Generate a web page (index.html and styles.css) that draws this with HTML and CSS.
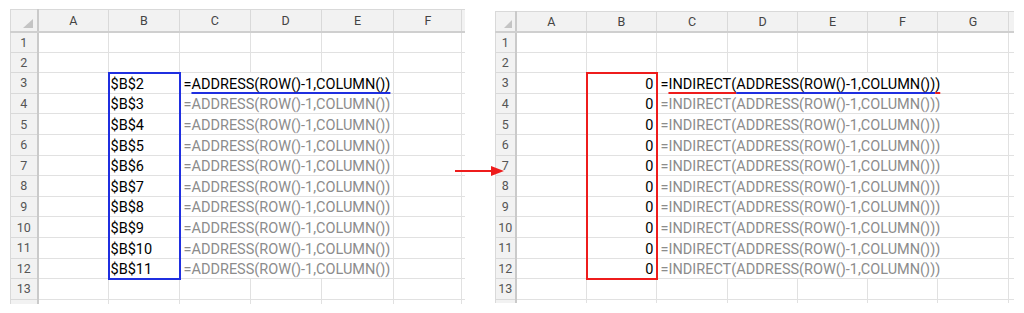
FILE: index.html
```html
<!DOCTYPE html>
<html lang="ja">
<head>
<meta charset="utf-8">
<title>ADDRESS / INDIRECT</title>
<link rel="stylesheet" href="styles.css">
</head>
<body>
<div class="page">
  <div class="sheet sheet-left">
    <table class="grid">
      <colgroup>
        <col style="width:27px"><col style="width:71px"><col style="width:71px"><col style="width:70px"><col style="width:70px"><col style="width:72px"><col style="width:68px"><col style="width:20px">
      </colgroup>
      <tr class="hdr"><th class="corner"><span class="tri"></span></th><th>A</th><th>B</th><th>C</th><th>D</th><th>E</th><th>F</th><th></th></tr>
      <tr><th>1</th><td></td><td></td><td></td><td></td><td></td><td></td><td></td></tr>
      <tr><th>2</th><td></td><td></td><td></td><td></td><td></td><td></td><td></td></tr>
      <tr><th>3</th><td></td><td class="sel-b top">$B$2</td><td colspan="3" class="f act">=<span class="ul-blue">ADDRESS(ROW()-1,COLUMN())</span></td><td></td><td></td></tr>
      <tr><th>4</th><td></td><td class="sel-b">$B$3</td><td colspan="3" class="f">=ADDRESS(ROW()-1,COLUMN())</td><td></td><td></td></tr>
      <tr><th>5</th><td></td><td class="sel-b">$B$4</td><td colspan="3" class="f">=ADDRESS(ROW()-1,COLUMN())</td><td></td><td></td></tr>
      <tr><th>6</th><td></td><td class="sel-b">$B$5</td><td colspan="3" class="f">=ADDRESS(ROW()-1,COLUMN())</td><td></td><td></td></tr>
      <tr><th>7</th><td></td><td class="sel-b">$B$6</td><td colspan="3" class="f">=ADDRESS(ROW()-1,COLUMN())</td><td></td><td></td></tr>
      <tr><th>8</th><td></td><td class="sel-b">$B$7</td><td colspan="3" class="f">=ADDRESS(ROW()-1,COLUMN())</td><td></td><td></td></tr>
      <tr><th>9</th><td></td><td class="sel-b">$B$8</td><td colspan="3" class="f">=ADDRESS(ROW()-1,COLUMN())</td><td></td><td></td></tr>
      <tr><th>10</th><td></td><td class="sel-b">$B$9</td><td colspan="3" class="f">=ADDRESS(ROW()-1,COLUMN())</td><td></td><td></td></tr>
      <tr><th>11</th><td></td><td class="sel-b">$B$10</td><td colspan="3" class="f">=ADDRESS(ROW()-1,COLUMN())</td><td></td><td></td></tr>
      <tr><th>12</th><td></td><td class="sel-b bottom">$B$11</td><td colspan="3" class="f">=ADDRESS(ROW()-1,COLUMN())</td><td></td><td></td></tr>
      <tr><th>13</th><td></td><td></td><td></td><td></td><td></td><td></td><td></td></tr>
      <tr><th></th><td></td><td></td><td></td><td></td><td></td><td></td><td></td></tr>
    </table>
  </div>

  <div class="sheet sheet-right">
    <table class="grid narrow">
      <colgroup>
        <col style="width:20px"><col style="width:71px"><col style="width:70px"><col style="width:71px"><col style="width:70px"><col style="width:70px"><col style="width:70px"><col style="width:71px"><col style="width:20px">
      </colgroup>
      <tr class="hdr hdr-r"><th class="corner"><span class="tri small"></span></th><th>A</th><th>B</th><th>C</th><th>D</th><th>E</th><th>F</th><th>G</th><th></th></tr>
      <tr><th>1</th><td></td><td></td><td></td><td></td><td></td><td></td><td></td><td></td></tr>
      <tr><th>2</th><td></td><td></td><td></td><td></td><td></td><td></td><td></td><td></td></tr>
      <tr><th>3</th><td></td><td class="sel-r num top">0</td><td colspan="5" class="f act">=<span class="ul-red">INDIRECT(</span><span class="ul-blue">ADDRESS(ROW()-1,COLUMN())</span><span class="ul-red">)</span></td><td></td></tr>
      <tr><th>4</th><td></td><td class="sel-r num">0</td><td colspan="5" class="f">=INDIRECT(ADDRESS(ROW()-1,COLUMN()))</td><td></td></tr>
      <tr><th>5</th><td></td><td class="sel-r num">0</td><td colspan="5" class="f">=INDIRECT(ADDRESS(ROW()-1,COLUMN()))</td><td></td></tr>
      <tr><th>6</th><td></td><td class="sel-r num">0</td><td colspan="5" class="f">=INDIRECT(ADDRESS(ROW()-1,COLUMN()))</td><td></td></tr>
      <tr><th>7</th><td></td><td class="sel-r num">0</td><td colspan="5" class="f">=INDIRECT(ADDRESS(ROW()-1,COLUMN()))</td><td></td></tr>
      <tr><th>8</th><td></td><td class="sel-r num">0</td><td colspan="5" class="f">=INDIRECT(ADDRESS(ROW()-1,COLUMN()))</td><td></td></tr>
      <tr><th>9</th><td></td><td class="sel-r num">0</td><td colspan="5" class="f">=INDIRECT(ADDRESS(ROW()-1,COLUMN()))</td><td></td></tr>
      <tr><th>10</th><td></td><td class="sel-r num">0</td><td colspan="5" class="f">=INDIRECT(ADDRESS(ROW()-1,COLUMN()))</td><td></td></tr>
      <tr><th>11</th><td></td><td class="sel-r num">0</td><td colspan="5" class="f">=INDIRECT(ADDRESS(ROW()-1,COLUMN()))</td><td></td></tr>
      <tr><th>12</th><td></td><td class="sel-r num bottom">0</td><td colspan="5" class="f">=INDIRECT(ADDRESS(ROW()-1,COLUMN()))</td><td></td></tr>
      <tr><th>13</th><td></td><td></td><td></td><td></td><td></td><td></td><td></td><td></td></tr>
      <tr><th></th><td></td><td></td><td></td><td></td><td></td><td></td><td></td><td></td></tr>
    </table>
  </div>

  <div class="arrow"><span class="shaft"></span><span class="head"></span></div>
</div>
</body>
</html>
```

FILE: styles.css
```css
* { box-sizing: border-box; }
html, body { margin: 0; padding: 0; background: #ffffff; }
body { font-family: Roboto, "Noto Sans", sans-serif; }

.page {
  position: relative;
  display: flex;
  align-items: flex-start;
  gap: 30px;
  padding: 9px 0 0 10px;
  width: 1024px;
  height: 313px;
}

.sheet { overflow: hidden; flex: none; }
.sheet-left { width: 455px; height: 295px; }
.sheet-right { width: 519px; height: 292px; margin-top: 2px; }

.grid {
  border-collapse: collapse;
  table-layout: fixed;
  width: max-content;
}

.grid tr { height: 20.6px; }
.grid tr.hdr { height: 22px; }
.grid tr.hdr-r { height: 20px; }

.grid td {
  border: 1px solid #e1e1e1;
  padding: 0 3px 0 3px;
  font-size: 14.5px;
  line-height: 17px;
  vertical-align: bottom;
  white-space: nowrap;
  overflow: visible;
  color: #000;
}

.grid th {
  background: #f2f2f2;
  border: 1px solid #d9d9d9;
  font-weight: normal;
  font-size: 12.5px;
  color: #555;
  padding: 0;
  text-align: center;
  vertical-align: middle;
  white-space: nowrap;
}

.grid tr.hdr th { color: #444; border-bottom: 2px solid #cfcfcf; }
.grid tr th:first-child { border-right: 2px solid #cacaca; }
.grid tr.hdr th:first-child { border-right: 2px solid #cacaca; }

.corner { position: relative; }
.tri {
  position: absolute;
  right: 4px;
  bottom: 3px;
  width: 0;
  height: 0;
  border-left: 10px solid transparent;
  border-bottom: 9px solid #c4c4c4;
}
.tri.small { right: 3px; border-left-width: 8px; border-bottom-width: 8px; }

.grid td.f { color: #8c8c8c; }
.grid td.f.act { color: #000; }

.grid td.sel-b { border-left: 2px solid #1f2fe0; border-right: 2px solid #1f2fe0; padding-left: 1px; }
.grid td.sel-r { border-left: 2px solid #ee1c1c; border-right: 2px solid #ee1c1c; }
.grid td.sel-b.top { border-top: 2px solid #1f2fe0; }
.grid td.sel-b.bottom { border-bottom: 2px solid #1f2fe0; }
.grid td.sel-r.top { border-top: 2px solid #ee1c1c; }
.grid td.sel-r.bottom { border-bottom: 2px solid #ee1c1c; }

.grid td.num { text-align: right; padding-right: 2px; }

.ul-blue, .ul-red {
  text-decoration: underline;
  text-decoration-thickness: 2px;
  text-underline-offset: 3px;
  text-decoration-skip-ink: none;
}
.ul-blue { text-decoration-color: #1f2fe0; }
.ul-red { text-decoration-color: #ee1c1c; }

.arrow {
  position: absolute;
  left: 455px;
  top: 166px;
  display: flex;
  align-items: center;
  height: 10px;
}
.shaft { display: block; width: 36px; height: 2px; background: #ee1c1c; }
.head {
  display: block;
  width: 0;
  height: 0;
  border-top: 5px solid transparent;
  border-bottom: 5px solid transparent;
  border-left: 13px solid #ee1c1c;
}
```
